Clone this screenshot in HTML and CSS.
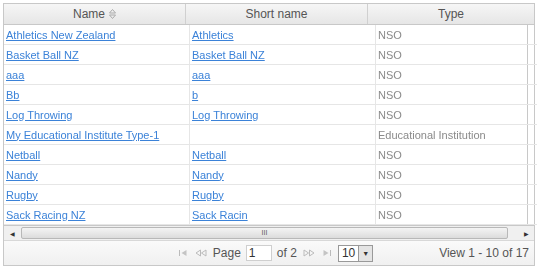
FILE: index.html
```html
<!DOCTYPE html>
<html lang="en">
<head>
    <meta charset="UTF-8">
    <title>Organisations</title>
    <link rel="stylesheet" href="styles.css">
</head>
<body>

<div class="grid">
    <div class="grid-head">
        <div class="hcell col-name">Name
            <svg class="sort" width="7" height="10" viewBox="0 0 7 10"><path d="M3.5 0.5 L6.5 4 L0.5 4 Z M3.5 9.5 L6.5 6 L0.5 6 Z" fill="none" stroke="#aaa"/></svg>
        </div>
        <div class="hcell col-short">Short name</div>
        <div class="hcell col-type">Type</div>
    </div>

    <div class="grid-body">
        <table class="rows">
            <tbody>
                <tr><td class="col-name"><a href="#">Athletics New Zealand</a></td><td class="col-short"><a href="#">Athletics</a></td><td class="col-type">NSO</td></tr>
                <tr><td class="col-name"><a href="#">Basket Ball NZ</a></td><td class="col-short"><a href="#">Basket Ball NZ</a></td><td class="col-type">NSO</td></tr>
                <tr><td class="col-name"><a href="#">aaa</a></td><td class="col-short"><a href="#">aaa</a></td><td class="col-type">NSO</td></tr>
                <tr><td class="col-name"><a href="#">Bb</a></td><td class="col-short"><a href="#">b</a></td><td class="col-type">NSO</td></tr>
                <tr><td class="col-name"><a href="#">Log Throwing</a></td><td class="col-short"><a href="#">Log Throwing</a></td><td class="col-type">NSO</td></tr>
                <tr><td class="col-name"><a href="#">My Educational Institute Type-1</a></td><td class="col-short"></td><td class="col-type">Educational Institution</td></tr>
                <tr><td class="col-name"><a href="#">Netball</a></td><td class="col-short"><a href="#">Netball</a></td><td class="col-type">NSO</td></tr>
                <tr><td class="col-name"><a href="#">Nandy</a></td><td class="col-short"><a href="#">Nandy</a></td><td class="col-type">NSO</td></tr>
                <tr><td class="col-name"><a href="#">Rugby</a></td><td class="col-short"><a href="#">Rugby</a></td><td class="col-type">NSO</td></tr>
                <tr><td class="col-name"><a href="#">Sack Racing NZ</a></td><td class="col-short"><a href="#">Sack Racin</a></td><td class="col-type">NSO</td></tr>
            </tbody>
        </table>
    </div>

    <div class="hscroll">
        <div class="arrow">&#9664;</div>
        <div class="track"><div class="thumb">III</div></div>
        <div class="arrow">&#9654;</div>
    </div>

    <div class="pager">
        <div class="pager-center">
            <svg class="pg-icon" width="10" height="8" viewBox="0 0 10 8"><path d="M1.5 1 V7" stroke="#bbb"/><path d="M8.5 1 L3.5 4 L8.5 7 Z" fill="#c4c4c4"/></svg>
            <svg class="pg-icon" width="12" height="8" viewBox="0 0 12 8"><path d="M5.5 1 L1 4 L5.5 7 Z M11 1 L6.5 4 L11 7 Z" fill="none" stroke="#bbb"/></svg>
            <span class="pg-label">Page</span>
            <input class="pg-input" type="text" value="1">
            <span class="pg-label">of 2</span>
            <svg class="pg-icon" width="12" height="8" viewBox="0 0 12 8"><path d="M1 1 L5.5 4 L1 7 Z M6.5 1 L11 4 L6.5 7 Z" fill="none" stroke="#bbb"/></svg>
            <svg class="pg-icon" width="10" height="8" viewBox="0 0 10 8"><path d="M1.5 1 L6.5 4 L1.5 7 Z" fill="#c4c4c4"/><path d="M8.5 1 V7" stroke="#bbb"/></svg>
            <div class="pg-select"><span>10</span><span class="drop">&#9660;</span></div>
        </div>
        <div class="pager-info">View 1 - 10 of 17</div>
    </div>
</div>

</body>
</html>
```

FILE: styles.css
```css
body {
    margin: 3px;
    font-family: "Liberation Sans", Arial, sans-serif;
    font-size: 11px;
    background-color: #ffffff;
    color: #333;
}
.grid {
    width: 530px;
    border: 1px solid #c8c8c8;
}
.grid-head {
    display: flex;
    height: 20px;
    background: linear-gradient(#f6f6f6, #e6e6e6);
    border-bottom: 1px solid #c8c8c8;
    color: #555;
    font-size: 12px;
}
.hcell {
    display: flex;
    align-items: center;
    justify-content: center;
    gap: 4px;
    border-right: 1px solid #d0d0d0;
}
.hcell.col-type {
    flex: 1;
    border-right: none;
}
.col-name {
    width: 181px;
}
.col-short {
    width: 181px;
}
.col-type {
    width: 159px;
}
.grid-body {
    width: 523px;
    border-right: 1px solid #c8c8c8;
}
.rows {
    width: 100%;
    border-collapse: collapse;
    table-layout: fixed;
}
.rows td {
    height: 19px;
    padding: 0 2px;
    border-bottom: 1px solid #e6e6e6;
    border-right: 1px solid #e6e6e6;
    white-space: nowrap;
    overflow: hidden;
    filter: blur(0.7px);
}
.rows td.col-type {
    color: #8a8a8a;
    border-right: none;
}
.rows a {
    color: #3b82d8;
    text-decoration: underline;
}
.hscroll {
    display: flex;
    height: 14px;
    border-top: 1px solid #c8c8c8;
    border-bottom: 1px solid #d8d8d8;
    background-color: #f0f0f0;
}
.arrow {
    width: 16px;
    display: flex;
    align-items: center;
    justify-content: center;
    font-size: 6px;
    color: #333;
}
.track {
    flex: 1;
    display: flex;
    padding: 1px 10px 1px 1px;
}
.thumb {
    flex: 1;
    border: 1px solid #b8b8b8;
    border-radius: 2px;
    background: linear-gradient(#f4f4f4, #dcdcdc);
    text-align: center;
    font-size: 7px;
    line-height: 10px;
    color: #555;
}
.pager {
    position: relative;
    height: 24px;
    display: flex;
    align-items: center;
    justify-content: center;
    background: linear-gradient(#fafafa, #f0f0f0);
    color: #555;
    font-size: 12px;
}
.pager-center {
    display: flex;
    align-items: center;
    gap: 5px;
    margin-left: 12px;
}
.pg-icon {
    margin: 0 1px;
}
.pg-input {
    width: 20px;
    height: 14px;
    padding: 0 2px;
    border: 1px solid #cfcfcf;
    font-family: inherit;
    font-size: 12px;
    color: #333;
}
.pg-select {
    display: flex;
    align-items: center;
    height: 15px;
    border: 1px solid #999;
    background-color: #fff;
    color: #333;
}
.pg-select span {
    padding: 0 3px;
}
.pg-select .drop {
    font-size: 7px;
    padding: 0 3px;
    height: 15px;
    line-height: 15px;
    background-color: #e4e4e4;
    border-left: 1px solid #999;
}
.pager-info {
    position: absolute;
    right: 5px;
    top: 5px;
}
```
